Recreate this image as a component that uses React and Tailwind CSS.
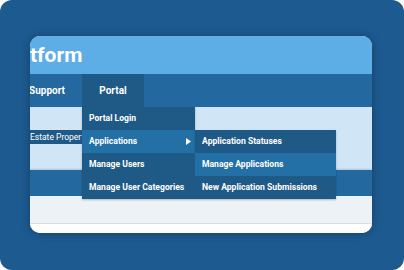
import React from 'react';

const font = { fontFamily: 'Roboto, "Liberation Sans", sans-serif' };

const MenuItem = ({ label, active, arrow, children }) => (
  <div className={`relative h-[23px] flex items-center pl-[7px] pr-[4px] ${active ? 'bg-[#2270a5]' : 'bg-[#1f5a87]'}`}>
    <span className="text-[8.6px] font-bold text-white whitespace-nowrap flex-1">{label}</span>
    {arrow && (
      <svg width="5" height="7" viewBox="0 0 5 7" className="shrink-0">
        <path d="M0 0 L5 3.5 L0 7 Z" fill="#ffffff" />
      </svg>
    )}
    {children}
  </div>
);

const App = () => {
  return (
    <div className="w-[404px] h-[270px] bg-white" style={font}>
      <div className="w-full h-full rounded-[12px] bg-[#1d5a90] pt-[36px] pl-[30px]">
        <div className="w-[342px] h-[197px] rounded-[10px] overflow-hidden bg-white shadow-[0_0_8px_rgba(0,0,0,0.3)] flex flex-col">
          {/* header */}
          <div className="h-[38px] bg-[#5dade6] flex items-center">
            <span className="text-[21px] font-bold text-white leading-none">tform</span>
          </div>

          {/* nav */}
          <div className="h-[33px] bg-[#2369a0] flex relative z-10">
            <div className="w-[52px] flex items-center">
              <span className="text-[10px] font-bold text-white -ml-[1px]">Support</span>
            </div>
            <div className="relative w-[62px] bg-[#1f5a87] flex items-center justify-center">
              <span className="text-[10px] font-bold text-white">Portal</span>
              <div className="absolute left-0 top-full w-[113px] shadow-[0_1px_2px_rgba(0,0,0,0.25)]">
                <MenuItem label="Portal Login" />
                <MenuItem label="Applications" active arrow>
                  <div className="absolute left-full top-0 w-[141px] shadow-[0_1px_2px_rgba(0,0,0,0.25)]">
                    <MenuItem label="Application Statuses" />
                    <MenuItem label="Manage Applications" active />
                    <MenuItem label="New Application Submissions" />
                  </div>
                </MenuItem>
                <MenuItem label="Manage Users" />
                <MenuItem label="Manage User Categories" />
              </div>
            </div>
          </div>

          {/* content */}
          <div className="h-[63px] bg-[#d0e6f7] pt-[23px]">
            <div className="h-[14px] w-[60px] bg-[#1f5a87] flex items-center">
              <span className="text-[8.5px] text-white whitespace-nowrap">Estate Properties</span>
            </div>
          </div>
          <div className="h-[26px] bg-[#2369a0] shadow-[0_-1px_2px_rgba(0,0,0,0.15)]" />
          <div className="h-[28px] bg-[#edf2f6] border-b border-[#d6dce3]" />
          <div className="flex-1 bg-white" />
        </div>
      </div>
    </div>
  );
};

export default App;
